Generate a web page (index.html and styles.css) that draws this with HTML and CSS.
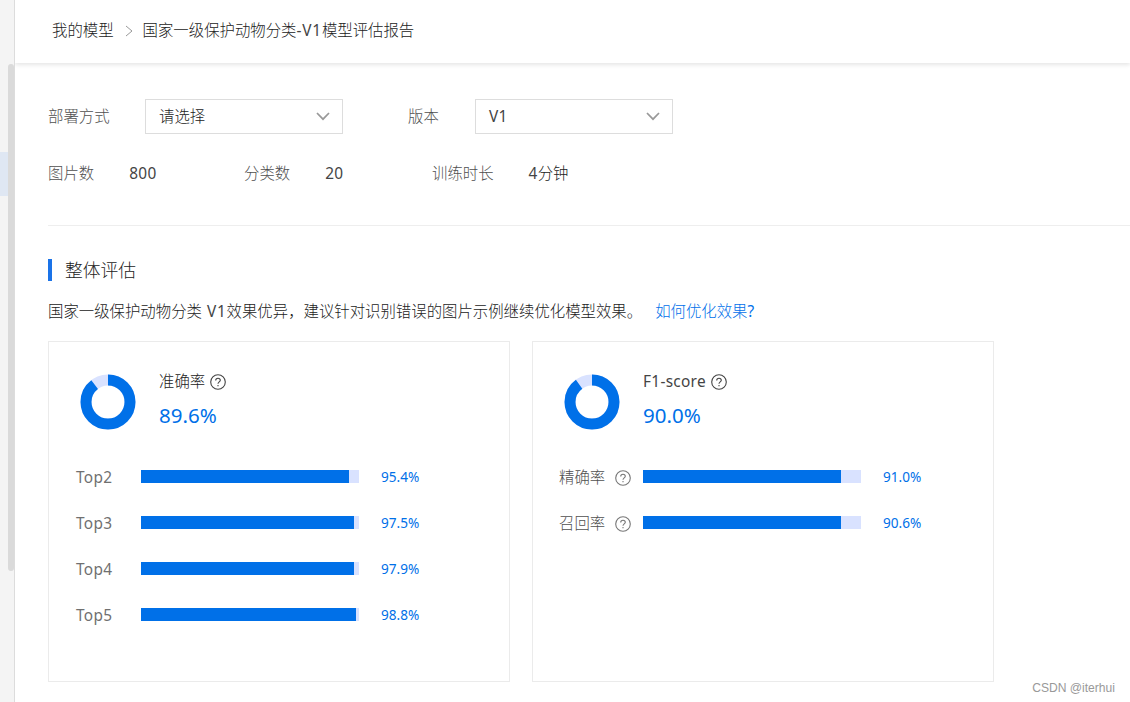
FILE: index.html
```
<!DOCTYPE html>
<html lang="zh-CN">
  <head>
    <meta charset="UTF-8" />
    <meta name="viewport" content="width=device-width, initial-scale=1.0" />
    <title>模型评估报告</title>
    <link rel="stylesheet" href="styles.css">
  </head>
  <body>
    <svg class="defs" width="0" height="0">
      <symbol id="help" viewBox="0 0 16 16">
        <circle cx="8" cy="8" r="7.3" />
        <path d="M5.7 6.4C5.7 5 6.7 4.2 8 4.2s2.3.8 2.3 2.1C10.3 7.9 8 8 8 9.8M8 11v1.2" />
      </symbol>
      <symbol id="arrow" viewBox="0 0 14 9">
        <path d="M1 1l6 6.2L13 1" />
      </symbol>
    </svg>
    <div class="layout">
      <aside class="sidebar">
        <div class="menu-active"></div>
        <div class="scroll-thumb"></div>
      </aside>
      <main class="main">
        <header class="header">
          <span class="crumb">我的模型</span>
          <svg class="crumb-sep" viewBox="0 0 8 12"><path d="M1 1l6 5-6 5" /></svg>
          <span class="crumb">国家一级保护动物分类<span class="latin wide">-V1</span>模型评估报告</span>
        </header>
        <div class="content">
          <div class="filters">
            <span class="label">部署方式</span>
            <div class="select"><span>请选择</span><svg class="arrow"><use href="#arrow" /></svg></div>
            <span class="label version">版本</span>
            <div class="select"><span class="latin">V1</span><svg class="arrow"><use href="#arrow" /></svg></div>
          </div>
          <div class="stats">
            <div class="stat images"><span class="label">图片数</span><span class="latin">800</span></div>
            <div class="stat classes"><span class="label">分类数</span><span class="latin">20</span></div>
            <div class="stat"><span class="label">训练时长</span><span><span class="latin">4</span>分钟</span></div>
          </div>
          <h2 class="section-title">整体评估</h2>
          <p class="summary">国家一级保护动物分类 <span class="latin wide">V1</span>效果优异，建议针对识别错误的图片示例继续优化模型效果。<a class="link">如何优化效果<span class="latin">?</span></a></p>
          <div class="cards">
            <section class="card">
              <div class="score">
                <svg class="ring" viewBox="0 0 56 56">
                  <circle class="ring-bg" cx="28" cy="28" r="22" />
                  <circle class="ring-value" cx="28" cy="28" r="22" pathLength="100" stroke-dasharray="89.6 100" />
                </svg>
                <div class="score-text">
                  <div class="score-name">准确率<svg class="help"><use href="#help" /></svg></div>
                  <div class="score-value">89.6%</div>
                </div>
              </div>
              <div class="row"><span class="name latin">Top2</span><div class="bar"><div class="fill" style="width: 95.4%"></div></div><span class="percent">95.4%</span></div>
              <div class="row"><span class="name latin">Top3</span><div class="bar"><div class="fill" style="width: 97.5%"></div></div><span class="percent">97.5%</span></div>
              <div class="row"><span class="name latin">Top4</span><div class="bar"><div class="fill" style="width: 97.9%"></div></div><span class="percent">97.9%</span></div>
              <div class="row"><span class="name latin">Top5</span><div class="bar"><div class="fill" style="width: 98.8%"></div></div><span class="percent">98.8%</span></div>
            </section>
            <section class="card f1">
              <div class="score">
                <svg class="ring" viewBox="0 0 56 56">
                  <circle class="ring-bg" cx="28" cy="28" r="22" />
                  <circle class="ring-value" cx="28" cy="28" r="22" pathLength="100" stroke-dasharray="90 100" />
                </svg>
                <div class="score-text">
                  <div class="score-name"><span class="latin">F1-score</span><svg class="help"><use href="#help" /></svg></div>
                  <div class="score-value">90.0%</div>
                </div>
              </div>
              <div class="row"><span class="name">精确率<svg class="help"><use href="#help" /></svg></span><div class="bar"><div class="fill" style="width: 91%"></div></div><span class="percent">91.0%</span></div>
              <div class="row"><span class="name">召回率<svg class="help"><use href="#help" /></svg></span><div class="bar"><div class="fill" style="width: 90.6%"></div></div><span class="percent">90.6%</span></div>
            </section>
          </div>
        </div>
      </main>
    </div>
    <div class="watermark">CSDN @iterhui</div>
  </body>
</html>
```
FILE: styles.css
```
* {
  margin: 0;
  padding: 0;
  box-sizing: border-box;
}
body {
  height: 702px;
  overflow: hidden;
  background-color: #fff;
  color: #222;
  font-family: "Noto Sans", "Noto Sans CJK SC", sans-serif;
  font-size: 15.4px;
  font-weight: 300;
  line-height: 22px;
}
svg {
  display: block;
  fill: none;
  flex-shrink: 0;
}
.defs {
  position: absolute;
}
.latin {
  color: #444;
  font-weight: 400;
  letter-spacing: 0.3px;
}
.wide {
  letter-spacing: 0.8px;
}
.link .latin {
  color: inherit;
}
.layout {
  display: flex;
  height: 702px;
}
.sidebar {
  display: flex;
  width: 15px;
  background-color: #f4f4f4;
  border-right: 1px solid #dcdcdc;
}
.menu-active {
  width: 8px;
  height: 44px;
  margin-top: 152px;
  background-color: #dfe7f3;
}
.scroll-thumb {
  width: 6px;
  height: 507px;
  margin-top: 64px;
  border-radius: 3px;
  background-color: #dadada;
}
.main {
  flex: 1;
  min-width: 0;
  overflow: hidden;
}
.header {
  display: flex;
  align-items: center;
  height: 63px;
  padding: 0 0 2px 37px;
  box-shadow: 0 2px 4px rgba(0, 0, 0, 0.1);
}
.crumb {
  white-space: nowrap;
}
.crumb-sep {
  width: 8px;
  height: 12px;
  margin: 0 10px 0 11px;
  stroke: #999;
}
.content {
  padding: 36px 0 0 33px;
}
.filters {
  display: flex;
  align-items: center;
  height: 35px;
}
.label {
  width: 97px;
  color: #505050;
}
.version {
  width: 67px;
  margin-left: 65px;
}
.select {
  display: flex;
  align-items: center;
  justify-content: space-between;
  width: 198px;
  height: 35px;
  padding: 0 12px 0 13px;
  border: 1px solid #ddd;
}
.arrow {
  width: 14px;
  height: 9px;
  stroke: #999;
  stroke-width: 1.7;
}
.stats {
  display: flex;
  height: 92px;
  padding-top: 29px;
  border-bottom: 1px solid #eee;
}
.stat {
  display: flex;
}
.stat .label {
  width: auto;
  margin-right: 35px;
}
.images {
  width: 196px;
}
.classes {
  width: 188px;
}
.section-title {
  height: 22px;
  margin-top: 33px;
  padding-left: 13px;
  border-left: 4px solid #1a73e8;
  font-size: 17.8px;
  font-weight: 300;
}
.summary {
  margin-top: 20px;
  white-space: nowrap;
  word-spacing: 1px;
}
.link {
  margin-left: 13px;
  color: #0070ea;
}
.cards {
  display: flex;
  gap: 22px;
  margin-top: 18px;
}
.card {
  width: 462px;
  height: 341px;
  padding: 28px 26px;
  border: 1px solid #ebebeb;
}
.score {
  display: flex;
  height: 62px;
  padding-left: 5px;
}
.ring {
  width: 56px;
  height: 56px;
  margin-top: 4px;
}
.ring-bg,
.ring-value {
  stroke: #d9e2ff;
  stroke-width: 11;
}
.ring-value {
  stroke: #0070e8;
  transform: rotate(-90deg);
  transform-origin: center;
}
.score-text {
  padding-top: 1px;
  margin-left: 23px;
}
.score-name,
.name {
  display: flex;
  align-items: center;
}
.help {
  width: 16px;
  height: 16px;
  margin-left: 5px;
  stroke: #444;
  stroke-width: 1.1;
}
.score-value {
  margin-top: 11px;
  color: #0070e8;
  font-size: 20.5px;
  font-weight: 400;
}
.row {
  display: flex;
  align-items: center;
  height: 22px;
  margin-top: 24px;
}
.score + .row {
  margin-top: 34px;
}
.name {
  width: 66px;
  padding: 1px 0 0 1px;
  color: #505050;
}
.name.latin {
  color: #707070;
}
.f1 .name {
  width: 84px;
  padding-left: 0;
}
.name .help {
  margin-left: 10px;
  stroke: #777;
}
.bar {
  width: 218px;
  height: 13px;
  margin-bottom: 2px;
  background-color: #d9e2ff;
}
.fill {
  height: 13px;
  background-color: #0070e8;
}
.percent {
  margin-left: 22px;
  color: #0070e8;
  font-size: 13.6px;
  font-weight: 400;
}
.watermark {
  position: absolute;
  right: 15px;
  bottom: 3px;
  color: #999;
  font-family: "Liberation Sans", Arial, sans-serif;
  font-size: 12.1px;
}
```
